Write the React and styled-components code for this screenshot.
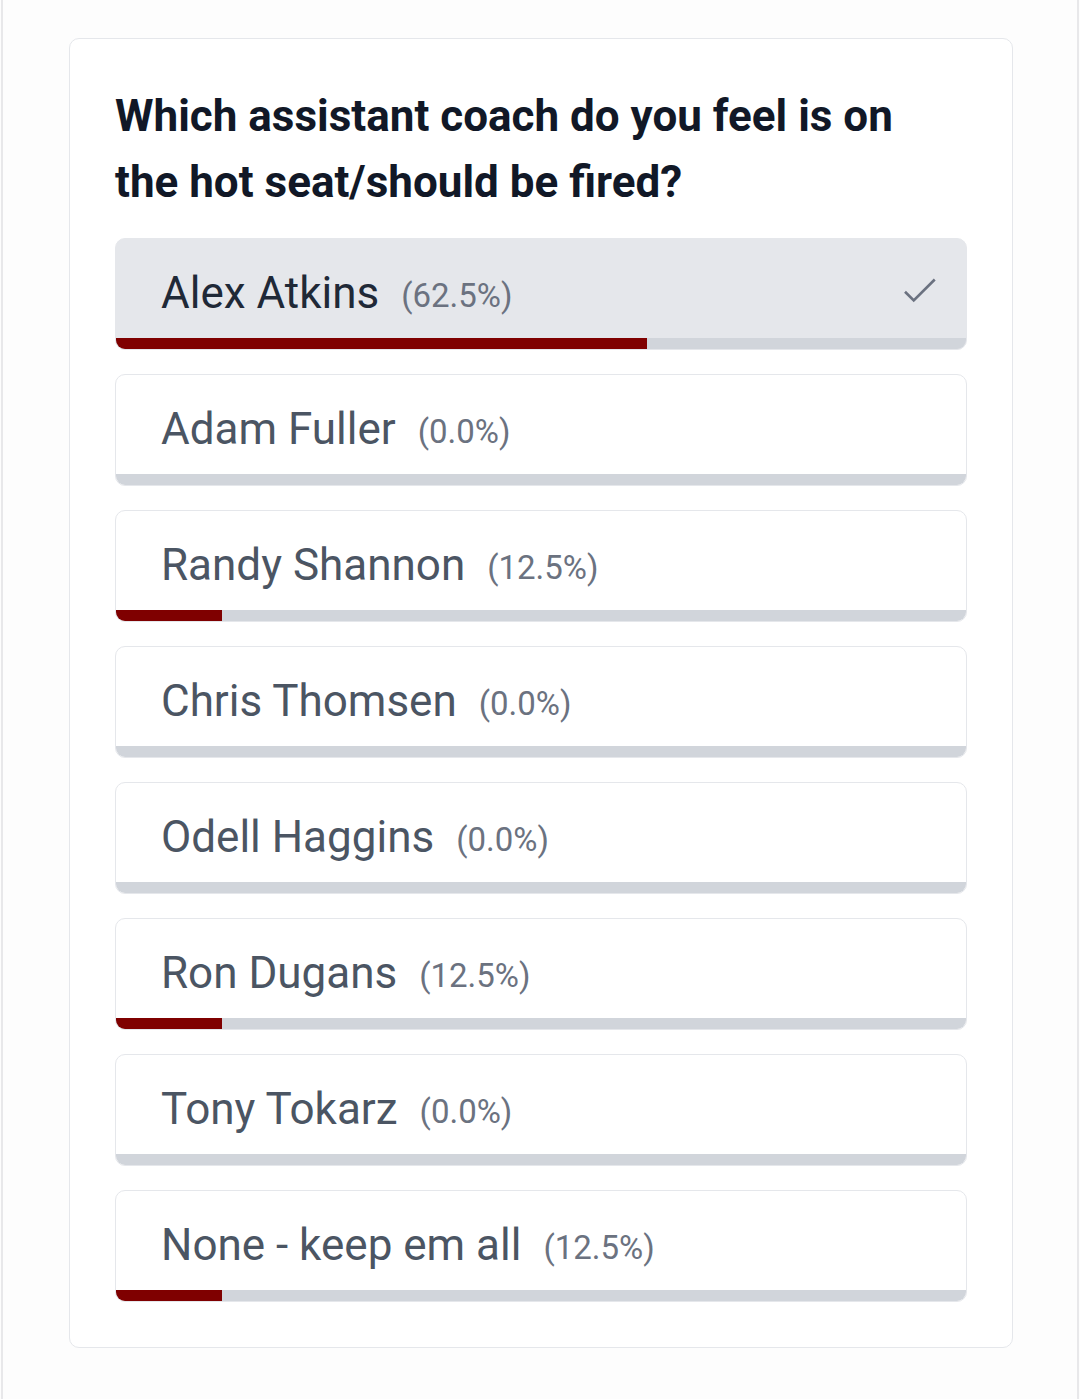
import React from 'react';
import styled, { createGlobalStyle } from 'styled-components';

const GlobalStyle = createGlobalStyle`
  body {
    margin: 0;
    background: #fdfdfd;
    font-family: Roboto, 'Liberation Sans', sans-serif;
  }
`;

const Page = styled.div`
  min-height: 1399px;
  box-sizing: border-box;
  margin: 0 1px;
  border-left: 2px solid #e8e8ea;
  border-right: 2px solid #e8e8ea;
  padding: 38px 64px 0 66px;
  background: #fdfdfd;
`;

const Card = styled.div`
  border: 1.5px solid #e5e7eb;
  border-radius: 10px;
  background: #fff;
  padding: 44px 45px 45px 45px;
`;

const Question = styled.h2`
  margin: 0 0 23px;
  padding-right: 40px;
  font-size: 44px;
  line-height: 66px;
  font-weight: 700;
  color: #111827;
`;

const Options = styled.div`
  display: flex;
  flex-direction: column;
  gap: 24px;
`;

const Option = styled.div`
  height: 112px;
  box-sizing: border-box;
  border: 1.5px solid #e5e7eb;
  border-radius: 10px;
  overflow: hidden;
  background: ${(props) => (props.selected ? '#e5e7eb' : '#fff')};
  display: flex;
  flex-direction: column;
`;

const Label = styled.div`
  flex: 1;
  display: flex;
  align-items: center;
  padding: 8px 26px 0 45px;
`;

const Name = styled.span`
  font-size: 44px;
  color: ${(props) => (props.selected ? '#1f2937' : '#4b5563')};
`;

const Percent = styled.span`
  font-size: 33px;
  color: #6b7280;
  margin-left: 22px;
  margin-top: 6px;
`;

const Check = styled.svg`
  margin-left: auto;
  margin-top: -6px;
  width: 42px;
  height: 42px;
`;

const Track = styled.div`
  height: 11px;
  background: #d1d5db;
`;

const Fill = styled.div`
  height: 100%;
  background: #7f0000;
`;

const options = [
  { name: 'Alex Atkins', pct: 62.5, selected: true },
  { name: 'Adam Fuller', pct: 0 },
  { name: 'Randy Shannon', pct: 12.5 },
  { name: 'Chris Thomsen', pct: 0 },
  { name: 'Odell Haggins', pct: 0 },
  { name: 'Ron Dugans', pct: 12.5 },
  { name: 'Tony Tokarz', pct: 0 },
  { name: 'None - keep em all', pct: 12.5 },
];

const App = () => {
  return (
    <Page>
      <GlobalStyle />
      <Card>
        <Question>
          Which assistant coach do you feel is on the hot seat/should be fired?
        </Question>
        <Options>
          {options.map((option) => (
            <Option key={option.name} selected={option.selected}>
              <Label>
                <Name selected={option.selected}>{option.name}</Name>
                <Percent>({option.pct.toFixed(1)}%)</Percent>
                {option.selected && (
                  <Check viewBox="0 0 24 24" fill="none" stroke="#6b7280" strokeWidth="1.5">
                    <path d="M4 13l5 5L21 6" />
                  </Check>
                )}
              </Label>
              <Track>
                <Fill style={{ width: `${option.pct}%` }} />
              </Track>
            </Option>
          ))}
        </Options>
      </Card>
    </Page>
  );
};

export default App;
